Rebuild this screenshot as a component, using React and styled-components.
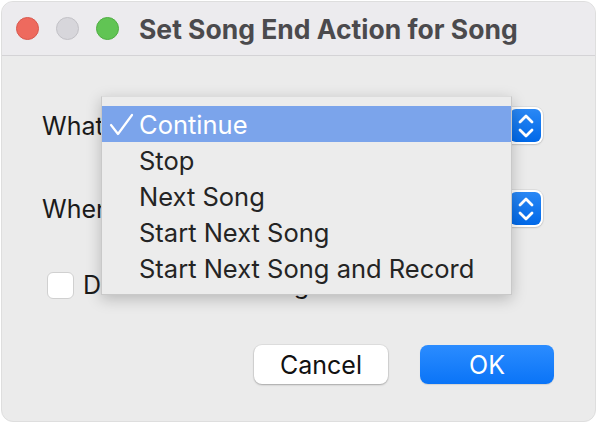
import React from 'react'
import styled, { createGlobalStyle } from 'styled-components'

const GlobalStyle = createGlobalStyle`
  html, body {
    margin: 0;
    padding: 0;
    background: #ffffff;
  }
  * {
    box-sizing: border-box;
  }
`

const Page = styled.div`
  width: 597px;
  height: 423px;
  padding: 1px;
  font-family: Inter, "Liberation Sans", sans-serif;
`

const Window = styled.div`
  position: relative;
  width: 595px;
  height: 421px;
  border-radius: 12px;
  overflow: hidden;
  background: #ebebeb;
  border: 1px solid #dedede;
  display: flex;
  flex-direction: column;
`

const TitleBar = styled.div`
  height: 54px;
  flex: none;
  display: flex;
  align-items: center;
  padding-left: 14px;
  background: #ecebee;
  border-bottom: 1px solid #d4d3d6;
`

const Light = styled.span`
  width: 23px;
  height: 23px;
  border-radius: 50%;
  margin-right: 17px;
  background: ${(p) => p.$color};
  border: 1px solid ${(p) => p.$edge};
`

const Title = styled.div`
  margin-left: 3px;
  font-size: 26.5px;
  font-weight: 700;
  color: #4b4a4d;
`

const Body = styled.div`
  flex: 1;
  display: flex;
  flex-direction: column;
  padding: 51px 41px 0 40px;
`

const Row = styled.div`
  display: flex;
  align-items: center;
  height: 37px;
  margin-right: 11px;
  margin-bottom: ${(p) => p.$gap}px;
`

const Label = styled.div`
  width: 80px;
  font-size: 25px;
  color: #1a1a1a;
`

const PopupButton = styled.div`
  flex: 1;
  height: 37px;
  display: flex;
  align-items: center;
  justify-content: flex-end;
  padding: 2px;
  border-radius: 8px;
  background: #ffffff;
  box-shadow: 0 0 0 1px rgba(0, 0, 0, 0.06), 0 1px 2px rgba(0, 0, 0, 0.12);
`

const Stepper = styled.div`
  width: 31px;
  height: 33px;
  border-radius: 6px;
  display: flex;
  align-items: center;
  justify-content: center;
  background: linear-gradient(#2a88f5, #0068e8);
`

const CheckRow = styled.div`
  display: flex;
  align-items: center;
  height: 28px;
  padding-left: 5px;
  margin-bottom: 46px;
`

const CheckBox = styled.div`
  width: 27px;
  height: 27px;
  border-radius: 6px;
  background: #ffffff;
  border: 1px solid #d0d0d0;
  margin-right: 9px;
`

const CheckLabel = styled.div`
  font-size: 25px;
  color: #1a1a1a;
`

const Buttons = styled.div`
  display: flex;
  justify-content: flex-end;
  gap: 32px;
`

const Button = styled.div`
  width: 134px;
  height: 39px;
  border-radius: 8px;
  display: flex;
  align-items: center;
  justify-content: center;
  font-size: 25px;
  color: ${(p) => (p.$primary ? '#ffffff' : '#111111')};
  background: ${(p) =>
    p.$primary ? 'linear-gradient(#2b8cff, #0a74f7)' : '#ffffff'};
  box-shadow: ${(p) =>
    p.$primary
      ? '0 1px 1px rgba(0, 0, 0, 0.1)'
      : '0 0 0 1px rgba(0, 0, 0, 0.05), 0 1px 2px rgba(0, 0, 0, 0.25)'};
`

const Menu = styled.div`
  position: absolute;
  left: 99px;
  top: 94px;
  width: 411px;
  padding: 9px 0 8px;
  background: #ececec;
  border: 1px solid #c9c9c9;
  border-top-color: #dcdcdc;
  box-shadow: 0 4px 14px rgba(0, 0, 0, 0.22);
  display: flex;
  flex-direction: column;
`

const MenuItem = styled.div`
  height: 36px;
  display: flex;
  align-items: center;
  padding-left: 7px;
  font-size: 25.5px;
  color: ${(p) => (p.$selected ? '#ffffff' : '#242424')};
  background: ${(p) => (p.$selected ? '#7ba4eb' : 'transparent')};
`

const Mark = styled.span`
  width: 30px;
  display: flex;
  align-items: center;
`

const Chevrons = () => (
  <svg width="18" height="26" viewBox="0 0 18 26" fill="none">
    <polyline points="3,9 9,3 15,9" stroke="#fff" strokeWidth="2.8" strokeLinecap="round" strokeLinejoin="round" />
    <polyline points="3,17 9,23 15,17" stroke="#fff" strokeWidth="2.8" strokeLinecap="round" strokeLinejoin="round" />
  </svg>
)

const Tick = () => (
  <svg width="25" height="23" viewBox="0 0 25 23" fill="none">
    <polyline points="2,12 9,21 23,2" stroke="#fff" strokeWidth="2.2" strokeLinecap="round" strokeLinejoin="round" />
  </svg>
)

const items = ['Continue', 'Stop', 'Next Song', 'Start Next Song', 'Start Next Song and Record']

export default function App() {
  return (
    <Page>
      <GlobalStyle />
      <Window>
        <TitleBar>
          <Light $color="#ee6a5e" $edge="#d9584d" />
          <Light $color="#d7d6db" $edge="#c2c1c6" />
          <Light $color="#61c454" $edge="#4fae42" />
          <Title>Set Song End Action for Song</Title>
        </TitleBar>
        <Body>
          <Row $gap={46}>
            <Label>What</Label>
            <PopupButton>
              <Stepper>
                <Chevrons />
              </Stepper>
            </PopupButton>
          </Row>
          <Row $gap={44}>
            <Label>When</Label>
            <PopupButton>
              <Stepper>
                <Chevrons />
              </Stepper>
            </PopupButton>
          </Row>
          <CheckRow>
            <CheckBox />
            <CheckLabel>Default for all Songs</CheckLabel>
          </CheckRow>
          <Buttons>
            <Button>Cancel</Button>
            <Button $primary>OK</Button>
          </Buttons>
        </Body>
        <Menu>
          {items.map((t, i) => (
            <MenuItem key={t} $selected={i === 0}>
              <Mark>{i === 0 && <Tick />}</Mark>
              {t}
            </MenuItem>
          ))}
        </Menu>
      </Window>
    </Page>
  )
}
